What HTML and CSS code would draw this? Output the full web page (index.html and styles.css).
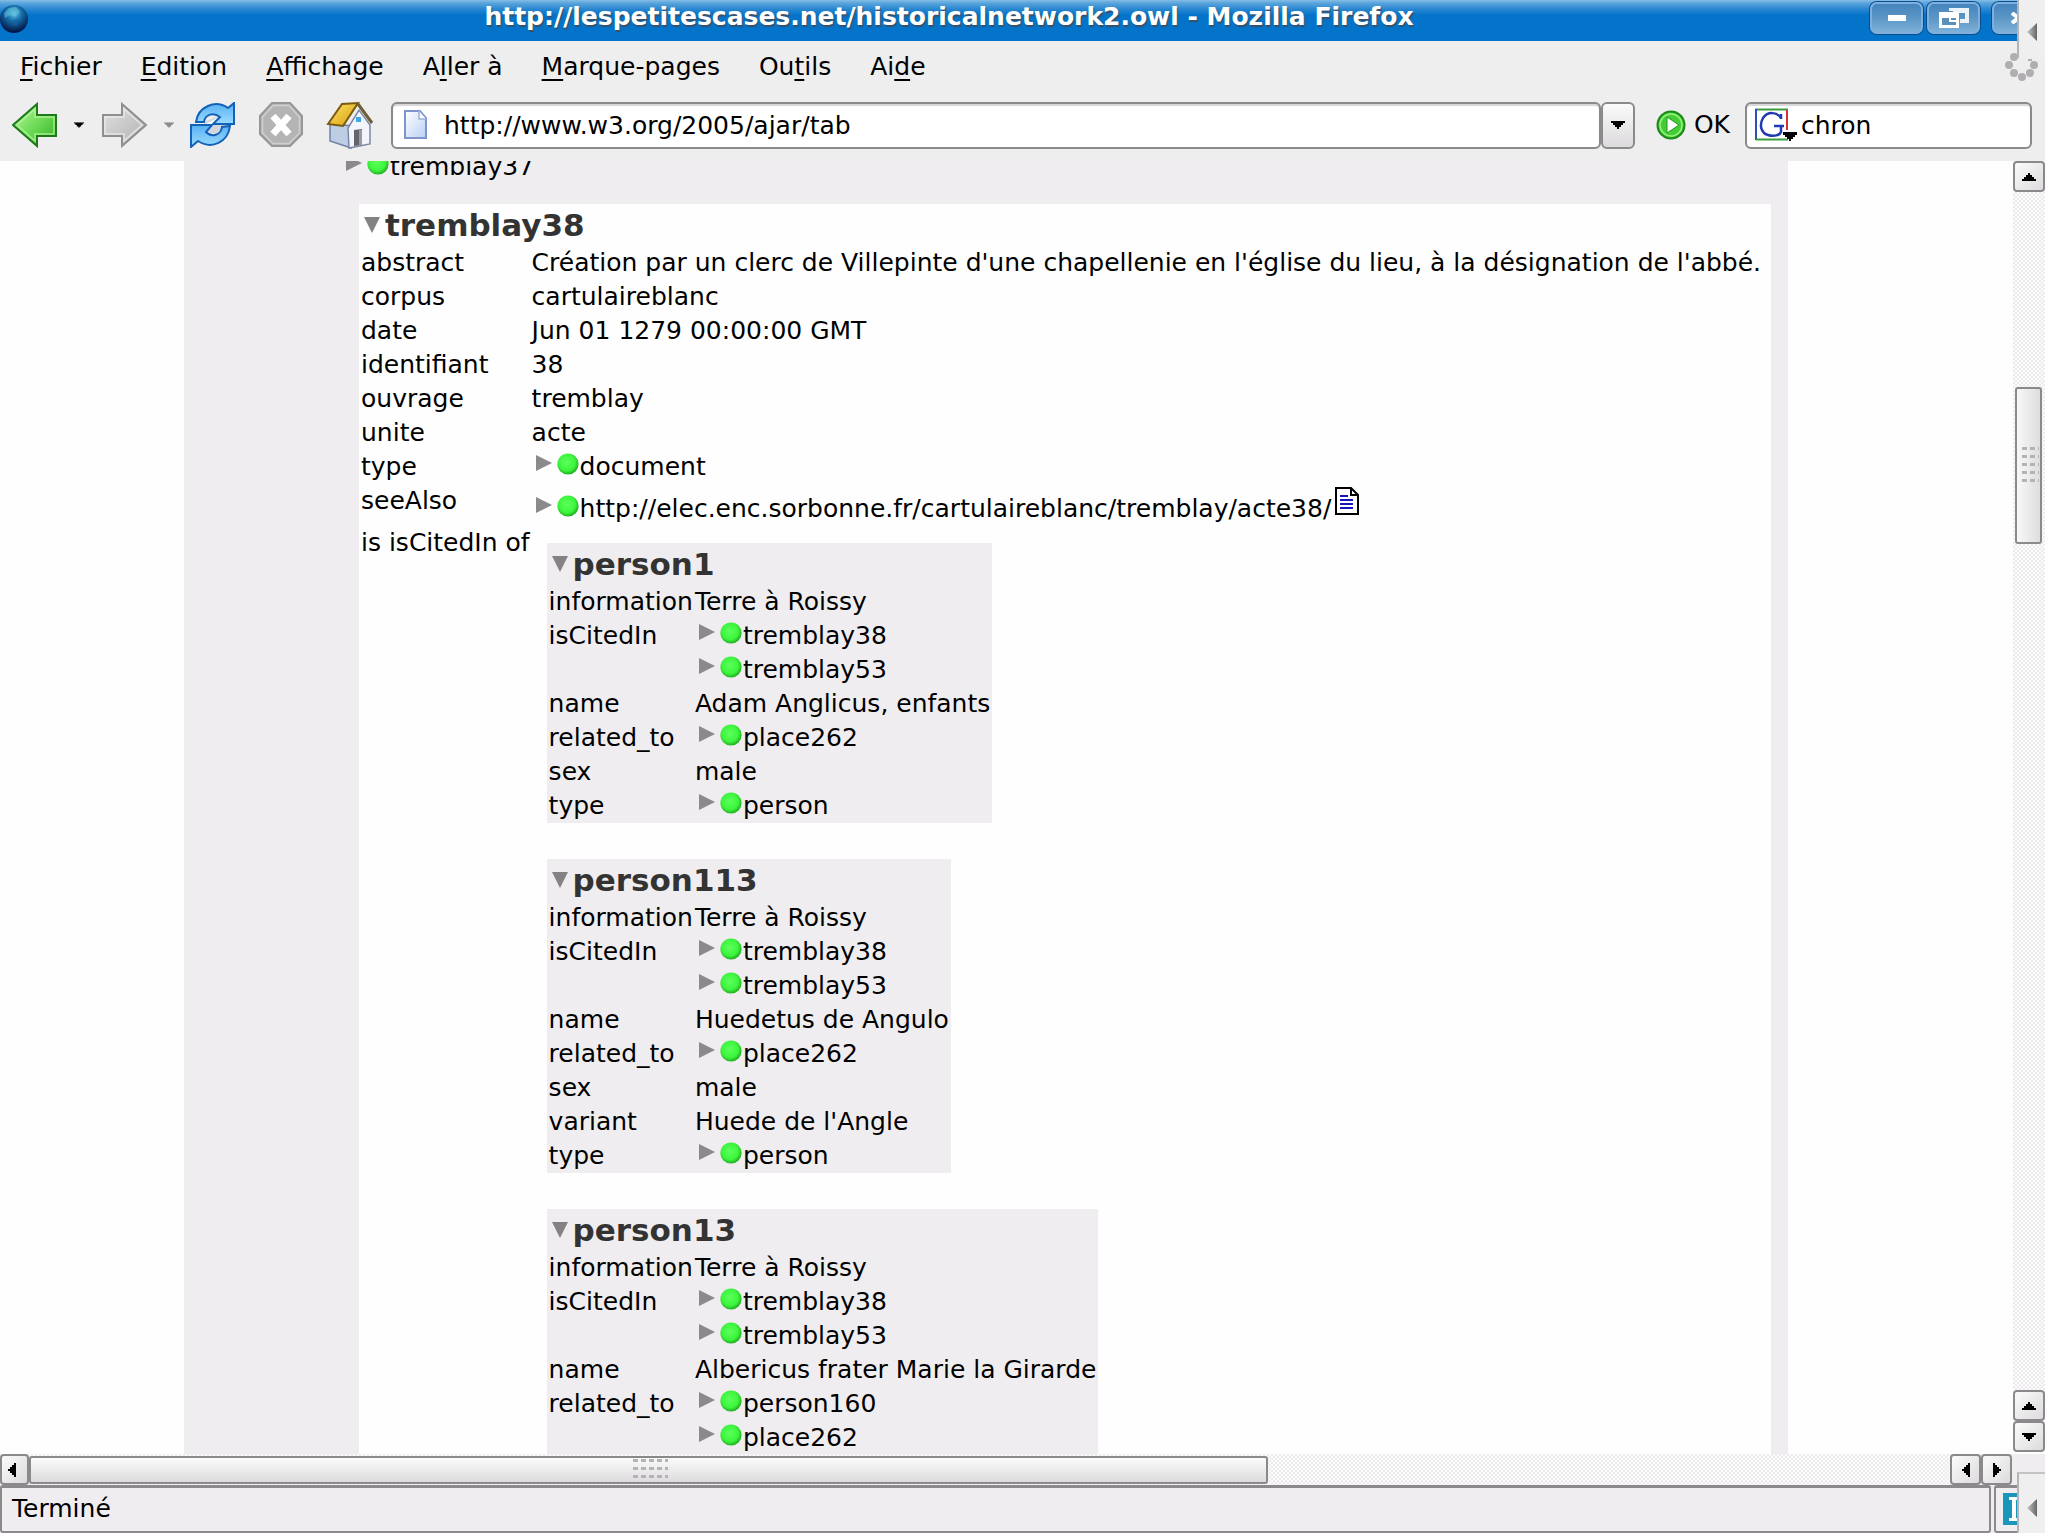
FILE: index.html
```html
<!DOCTYPE html>
<html lang="fr">
<head>
<meta charset="utf-8">
<title>http://lespetitescases.net/historicalnetwork2.owl - Mozilla Firefox</title>
<link rel="stylesheet" href="styles.css">
</head>
<body>
<svg class="defs" width="0" height="0" aria-hidden="true">
  <defs>
    <linearGradient id="g-green" x1="0" y1="0" x2="1" y2="1"><stop offset="0" stop-color="#c4f5a8"/><stop offset=".5" stop-color="#6fdc58"/><stop offset="1" stop-color="#2fae22"/></linearGradient>
    <linearGradient id="g-grey" x1="0" y1="0" x2="1" y2="1"><stop offset="0" stop-color="#e2e2e2"/><stop offset="1" stop-color="#b0b0b0"/></linearGradient>
    <linearGradient id="g-blue" x1="0" y1="0" x2="0" y2="1"><stop offset="0" stop-color="#58b0f4"/><stop offset="1" stop-color="#9bdcff"/></linearGradient>
    <linearGradient id="g-roof" x1="0" y1="0" x2="1" y2="1"><stop offset="0" stop-color="#ffe36a"/><stop offset="1" stop-color="#d79e08"/></linearGradient>
    <linearGradient id="g-page" x1="0" y1="0" x2="1" y2="1"><stop offset="0" stop-color="#ffffff"/><stop offset="1" stop-color="#b9d0f6"/></linearGradient>
    <linearGradient id="g-tri" x1="0" y1="0" x2="1" y2="0"><stop offset="0" stop-color="#c8c8c8"/><stop offset="1" stop-color="#666666"/></linearGradient>
    <radialGradient id="g-ball" cx=".45" cy=".42" r=".6"><stop offset="0" stop-color="#5cff5c"/><stop offset=".65" stop-color="#3df53d"/><stop offset="1" stop-color="#1da51d"/></radialGradient>
    <radialGradient id="g-globe" cx=".5" cy=".3" r=".65"><stop offset="0" stop-color="#5fc2e4"/><stop offset=".45" stop-color="#146aa6"/><stop offset="1" stop-color="#041848"/></radialGradient>
  </defs>
  <symbol id="closed" viewBox="0 0 16 16"><path d="M0 0L16 8L0 16Z" fill="#8b898b"/></symbol>
  <symbol id="open" viewBox="0 0 16 16"><path d="M0 0H16L8 16Z" fill="#848284"/></symbol>
  <symbol id="ball" viewBox="0 0 22 22"><circle cx="11" cy="11" r="10.6" fill="url(#g-ball)"/></symbol>
  <symbol id="up" viewBox="0 0 14 8"><path d="M6 0H8V2H10V4H12V6H14V8H0V6H2V4H4V2H6Z"/></symbol>
  <symbol id="down" viewBox="0 0 14 8"><path d="M0 0H14V2H12V4H10V6H8V8H6V6H4V4H2V2H0Z"/></symbol>
  <symbol id="left" viewBox="0 0 8 14"><path d="M8 0V14H6V12H4V10H2V8H0V6H2V4H4V2H6V0Z"/></symbol>
  <symbol id="right" viewBox="0 0 8 14"><path d="M0 0V14H2V12H4V10H6V8H8V6H6V4H4V2H2V0Z"/></symbol>
</svg>

<div class="window">
  <header class="titlebar">
    <svg class="globe" viewBox="0 0 28 28"><circle cx="14" cy="14" r="14" fill="url(#g-globe)"/><path d="M9 3L16 2L20 7L15 12L10 10L5 13L4 8Z" fill="#64c4dc" opacity=".55"/><path d="M14 15L19 14L17 21L12 20Z" fill="#1c5fa0" opacity=".6"/></svg>
    <h1 class="title">http://lespetitescases.net/historicalnetwork2.owl - Mozilla Firefox</h1>
    <div class="winbtns">
      <button class="winbtn" aria-label="Réduire"><svg width="18" height="6"><rect width="18" height="6" fill="#fff"/></svg></button>
      <button class="winbtn" aria-label="Restaurer"><svg width="30" height="20" viewBox="0 0 30 20"><path d="M10 0H30V15H21V11H26V5H14V3H10Z" fill="#eef3f8"/><path d="M0 4H20V20H0Z" fill="#fff"/><path d="M3 10H10V14H17V17H3Z" fill="#5c8fb8"/><path d="M12 10H17V12H12Z" fill="#5c8fb8"/></svg></button>
      <button class="winbtn close" aria-label="Fermer"><svg width="16" height="12" viewBox="0 0 16 12"><path d="M1 1L14 11M14 1L1 11" stroke="#fff" stroke-width="4"/></svg></button>
    </div>
  </header>

  <nav class="menubar">
    <button><u>F</u>ichier</button>
    <button><u>E</u>dition</button>
    <button><u>A</u>ffichage</button>
    <button>A<u>l</u>ler à</button>
    <button><u>M</u>arque-pages</button>
    <button>Ou<u>t</u>ils</button>
    <button>Ai<u>d</u>e</button>
    <svg class="throbber" viewBox="0 0 34 30" fill="#b0aeb0"><circle cx="9" cy="5" r="4"/><circle cx="4" cy="13" r="4"/><circle cx="9" cy="21" r="4"/><circle cx="17" cy="25" r="4"/><circle cx="25" cy="21" r="4"/><circle cx="29" cy="13" r="4"/><path d="M23 7H27V9H23Z"/></svg>
  </nav>

  <div class="toolbar">
    <button class="tool" aria-label="Précédent"><svg width="46" height="46" viewBox="0 0 46 46"><path d="M1 23L25 2V13H44V34H25V44Z" fill="url(#g-green)" stroke="#1c7a18" stroke-width="2"/><path d="M5 23L23 7V15H42V32H23V39Z" fill="none" stroke="#b6f59c" stroke-width="1.5" opacity=".8"/></svg></button>
    <button class="drop" aria-label="Historique précédent"><svg width="10" height="6" viewBox="0 0 14 8"><use href="#down"/></svg></button>
    <button class="tool" aria-label="Suivant"><svg width="46" height="46" viewBox="0 0 46 46"><path d="M44 23L20 2V13H1V34H20V44Z" fill="url(#g-grey)" stroke="#8f8f8f" stroke-width="2"/><path d="M40 23L22 7V15H3V32H22V39Z" fill="none" stroke="#ececec" stroke-width="1.5" opacity=".8"/></svg></button>
    <button class="drop off" aria-label="Historique suivant"><svg width="10" height="6" viewBox="0 0 14 8"><use href="#down"/></svg></button>
    <button class="tool reload" aria-label="Recharger"><svg width="46" height="46" viewBox="0 0 46 46"><path d="M14 20L29 14L40 24L28 32L17 30Z" fill="#d4d6de"/><path d="M16 22L27 16L30 18L20 26Z" fill="#fff"/><path d="M6 20C8 5 25 -3 38 6L44 1V22H23L30 15C24 10 15 12 14 20Z" fill="url(#g-blue)" stroke="#1263b8" stroke-width="2"/><path d="M40 24C38 40 22 48 8 39L1 45V23H22L16 30C22 36 31 33 32 25Z" fill="url(#g-blue)" stroke="#1263b8" stroke-width="2"/></svg></button>
    <button class="tool" aria-label="Arrêter"><svg width="46" height="46" viewBox="0 0 46 46"><path d="M14 1H32L44 14V32L32 44H14L2 32V14Z" fill="#b4b4b4" stroke="#979797" stroke-width="2"/><path d="M15 3.500H31L41.500 15V31L31 41.500H15L4.500 31V15Z" fill="none" stroke="#cfcfcf" stroke-width="1.500"/><path d="M15 14L31 32M31 14L15 32" stroke="#fff" stroke-width="7"/></svg></button>
    <button class="tool home" aria-label="Accueil"><svg width="48" height="48" viewBox="0 0 48 48"><path d="M4 22L25 25V47L4 40Z" fill="#bccde4" stroke="#6f83a8" stroke-width="1.500"/><path d="M22 27L33 9L44 24V43L23 47Z" fill="#f2f5fb" stroke="#7d88a6" stroke-width="1.500"/><path d="M28 29L36 28V44L28 45Z" fill="#64646c"/><path d="M33 29H36V44H33Z" fill="#9a9aa0"/><rect x="30" y="16" width="5" height="5" fill="#3ea8e4"/><path d="M2 23L16 3L32 2L17 25Z" fill="url(#g-roof)" stroke="#7a5a10" stroke-width="2"/><path d="M32 3L46 22" stroke="#6b6038" stroke-width="3"/></svg></button>
    <label class="field address">
      <svg width="24" height="30" viewBox="0 0 24 30"><path d="M1 1H16L22 8V28H1Z" fill="url(#g-page)" stroke="#7f94cc" stroke-width="2"/><path d="M15 1V9H22" fill="#fff" stroke="#9fb0d8" stroke-width="1.500"/></svg>
      <input type="text" aria-label="Adresse" value="http://www.w3.org/2005/ajar/tab">
    </label>
    <button class="urldrop" aria-label="Adresses visitées"><svg width="14" height="8"><use href="#down"/></svg></button>
    <button class="go"><svg width="30" height="30" viewBox="0 0 30 30"><circle cx="15" cy="15" r="13.500" fill="#43cc35" stroke="#1b8a16" stroke-width="2"/><circle cx="15" cy="15" r="11" fill="none" stroke="#98f080" stroke-width="1.500"/><path d="M11 7L23 15L11 23Z" fill="#fff" stroke="#1f9a1a"/></svg>OK</button>
    <label class="field search">
      <svg width="44" height="34" viewBox="0 0 44 34"><rect x="1" y="1" width="31" height="31" fill="#fff"/><path d="M0 1.500H33" stroke="#3a9c3a" stroke-width="2"/><path d="M1 1V32" stroke="#2a50c0" stroke-width="2"/><path d="M32 2V22" stroke="#d83030" stroke-width="2"/><path d="M1 31.500H33" stroke="#3a9c3a" stroke-width="2"/><path d="M26 11V6M26 10C22 4 13 3 8 10C4 17 6 25 13 27C19 29 25 27 26 24V18M19 18H29" fill="none" stroke="#2038b0" stroke-width="2.500"/><path d="M28 24H42V27H40V29H38V31H36V33H34V31H32V29H30V27H28Z"/></svg>
      <input type="text" aria-label="Recherche" value="chron">
    </label>
  </div>

  <div class="browser">
    <main class="view">
      <div class="sheet">
        <div class="node prev"><button class="tog" aria-label="Ouvrir"><svg><use href="#closed"/></svg></button><svg class="ball"><use href="#ball"/></svg><a href="#t37">tremblay37</a></div>
        <table class="card main">
          <tr><th colspan="2"><button class="tog" aria-label="Fermer"><svg><use href="#open"/></svg></button>tremblay38</th></tr>
          <tr><td class="key">abstract</td><td>Création par un clerc de Villepinte d'une chapellenie en l'église du lieu, à la désignation de l'abbé.</td></tr>
          <tr><td>corpus</td><td>cartulaireblanc</td></tr>
          <tr><td>date</td><td>Jun 01 1279 00:00:00 GMT</td></tr>
          <tr><td>identifiant</td><td>38</td></tr>
          <tr><td>ouvrage</td><td>tremblay</td></tr>
          <tr><td>unite</td><td>acte</td></tr>
          <tr><td>type</td><td><div class="node"><button class="tog" aria-label="Ouvrir"><svg><use href="#closed"/></svg></button><svg class="ball"><use href="#ball"/></svg><a href="#document">document</a></div></td></tr>
          <tr class="see"><td>seeAlso</td><td><div class="node"><button class="tog" aria-label="Ouvrir"><svg><use href="#closed"/></svg></button><svg class="ball"><use href="#ball"/></svg><a href="#acte38">http://elec.enc.sorbonne.fr/cartulaireblanc/tremblay/acte38/</a><svg class="doc" viewBox="0 0 26 28"><path d="M2 1H17L24 8V27H2Z" fill="#fff" stroke="#000" stroke-width="2"/><path d="M17 1V8H24" fill="none" stroke="#000" stroke-width="2"/><path d="M6 9H14M6 13H19M6 17H19M6 21H19" stroke="#1414c0" stroke-width="2"/></svg></div></td></tr>
          <tr><td>is isCitedIn of</td><td>
            <table class="card">
              <tr><th colspan="2"><button class="tog" aria-label="Fermer"><svg><use href="#open"/></svg></button>person1</th></tr>
              <tr><td class="key">information</td><td>Terre à Roissy</td></tr>
              <tr><td>isCitedIn</td><td><div class="node"><button class="tog" aria-label="Ouvrir"><svg><use href="#closed"/></svg></button><svg class="ball"><use href="#ball"/></svg><a href="#t38">tremblay38</a></div><div class="node"><button class="tog" aria-label="Ouvrir"><svg><use href="#closed"/></svg></button><svg class="ball"><use href="#ball"/></svg><a href="#t53">tremblay53</a></div></td></tr>
              <tr><td>name</td><td>Adam Anglicus, enfants</td></tr>
              <tr><td>related_to</td><td><div class="node"><button class="tog" aria-label="Ouvrir"><svg><use href="#closed"/></svg></button><svg class="ball"><use href="#ball"/></svg><a href="#p262">place262</a></div></td></tr>
              <tr><td>sex</td><td>male</td></tr>
              <tr><td>type</td><td><div class="node"><button class="tog" aria-label="Ouvrir"><svg><use href="#closed"/></svg></button><svg class="ball"><use href="#ball"/></svg><a href="#person">person</a></div></td></tr>
            </table>
            <table class="card">
              <tr><th colspan="2"><button class="tog" aria-label="Fermer"><svg><use href="#open"/></svg></button>person113</th></tr>
              <tr><td class="key">information</td><td>Terre à Roissy</td></tr>
              <tr><td>isCitedIn</td><td><div class="node"><button class="tog" aria-label="Ouvrir"><svg><use href="#closed"/></svg></button><svg class="ball"><use href="#ball"/></svg><a href="#t38">tremblay38</a></div><div class="node"><button class="tog" aria-label="Ouvrir"><svg><use href="#closed"/></svg></button><svg class="ball"><use href="#ball"/></svg><a href="#t53">tremblay53</a></div></td></tr>
              <tr><td>name</td><td>Huedetus de Angulo</td></tr>
              <tr><td>related_to</td><td><div class="node"><button class="tog" aria-label="Ouvrir"><svg><use href="#closed"/></svg></button><svg class="ball"><use href="#ball"/></svg><a href="#p262">place262</a></div></td></tr>
              <tr><td>sex</td><td>male</td></tr>
              <tr><td>variant</td><td>Huede de l'Angle</td></tr>
              <tr><td>type</td><td><div class="node"><button class="tog" aria-label="Ouvrir"><svg><use href="#closed"/></svg></button><svg class="ball"><use href="#ball"/></svg><a href="#person">person</a></div></td></tr>
            </table>
            <table class="card">
              <tr><th colspan="2"><button class="tog" aria-label="Fermer"><svg><use href="#open"/></svg></button>person13</th></tr>
              <tr><td class="key">information</td><td>Terre à Roissy</td></tr>
              <tr><td>isCitedIn</td><td><div class="node"><button class="tog" aria-label="Ouvrir"><svg><use href="#closed"/></svg></button><svg class="ball"><use href="#ball"/></svg><a href="#t38">tremblay38</a></div><div class="node"><button class="tog" aria-label="Ouvrir"><svg><use href="#closed"/></svg></button><svg class="ball"><use href="#ball"/></svg><a href="#t53">tremblay53</a></div></td></tr>
              <tr><td>name</td><td>Albericus frater Marie la Girarde</td></tr>
              <tr><td>related_to</td><td><div class="node"><button class="tog" aria-label="Ouvrir"><svg><use href="#closed"/></svg></button><svg class="ball"><use href="#ball"/></svg><a href="#p160">person160</a></div><div class="node"><button class="tog" aria-label="Ouvrir"><svg><use href="#closed"/></svg></button><svg class="ball"><use href="#ball"/></svg><a href="#p262">place262</a></div></td></tr>
            </table>
          </td></tr>
        </table>
      </div>
    </main>
    <div class="vbar">
      <button class="sb" aria-label="Haut"><svg width="14" height="8"><use href="#up"/></svg></button>
      <div class="vtrack"><div class="vthumb"><i class="grip"></i></div></div>
      <button class="sb" aria-label="Haut"><svg width="14" height="8"><use href="#up"/></svg></button>
      <button class="sb" aria-label="Bas"><svg width="14" height="8"><use href="#down"/></svg></button>
    </div>
  </div>
  <div class="hbar">
    <button class="sb" aria-label="Gauche"><svg width="8" height="14"><use href="#left"/></svg></button>
    <div class="htrack"><div class="hthumb"><i class="grip wide"></i></div></div>
    <button class="sb" aria-label="Gauche"><svg width="8" height="14"><use href="#left"/></svg></button>
    <button class="sb" aria-label="Droite"><svg width="8" height="14"><use href="#right"/></svg></button>
  </div>
  <footer class="status">
    <div class="msg">Terminé</div>
    <div class="ext"><svg width="16" height="32" viewBox="0 0 16 32"><rect width="16" height="32" fill="#1b96bb"/><path d="M6 4H16V7H13V25H16V28H6V25H9V7H6Z" fill="#fff"/></svg></div>
  </footer>
  <div class="edge top"><svg width="10" height="18" viewBox="0 0 10 18"><path d="M10 0V18L0 9Z" fill="url(#g-tri)"/></svg></div>
  <div class="edge bottom"><svg width="10" height="18" viewBox="0 0 10 18"><path d="M10 0V18L0 9Z" fill="url(#g-tri)"/></svg></div>
</div>
</body>
</html>
```
FILE: styles.css
```css
* { box-sizing: border-box; }
body {
  margin: 0;
  background: #fefefe;
  color: #000;
  font: 25px/34px "DejaVu Sans", sans-serif;
}
button, input { font: inherit; color: inherit; border: 0; padding: 0; background: none; }
a { color: inherit; text-decoration: none; }
svg { display: block; flex: none; }
.defs { position: absolute; }

.window {
  position: relative;
  display: flex;
  flex-direction: column;
  height: 100vh;
  margin-right: 3px;
  padding-bottom: 3px;
  overflow: hidden;
}

/* Title bar */
.titlebar {
  display: flex;
  align-items: center;
  height: 41px;
  flex: none;
  background: linear-gradient(#86bde6 0, #5ba5dc 3px, #2a87d0 9px, #0474ca 15px, #0474ca);
}
.globe { width: 28px; height: 28px; margin-bottom: 4px; }
.title {
  flex: 1;
  margin: 0;
  padding-bottom: 8px;
  text-align: center;
  color: #fff;
  font-size: 25px;
  line-height: 32px;
  text-shadow: 1px 2px 1px #3a5068;
  white-space: nowrap;
}
.winbtns { display: flex; gap: 4px; padding-bottom: 6px; }
.winbtn {
  display: grid;
  place-items: center;
  width: 53px;
  height: 32px;
  border: 2px solid #7fb0dc;
  border-radius: 7px;
  background: linear-gradient(#4484bd, #5c96c6 50%, #7db0d8);
  box-shadow: 0 0 0 1px #0a4c8c;
}
.winbtn.close { margin-left: 8px; }

/* Menus */
.menubar {
  display: flex;
  align-items: center;
  gap: 39px;
  height: 50px;
  flex: none;
  padding: 2px 6px 0 20px;
  background: #eeeeee;
}
.menubar u { text-underline-offset: 4px; text-decoration-thickness: 2px; }
.throbber { width: 34px; height: 30px; margin-left: auto; }

/* Toolbar */
.toolbar {
  display: flex;
  align-items: center;
  height: 70px;
  flex: none;
  padding: 0 13px 2px 12px;
  background: #efeeef;
}
.drop { width: 10px; margin: 0 18px 0 16px; }
.drop.off { fill: #8c8c8c; margin-right: 16px; }
.tool.reload { margin-right: 22px; }
.tool.home { margin: 0 17px 0 22px; }
.field {
  display: flex;
  align-items: center;
  height: 47px;
  border: 2px solid #8b898b;
  border-radius: 6px;
  background: #fff;
  box-shadow: inset 0 2px 1px #d8d6d8;
}
.field input { flex: 1; min-width: 0; padding-top: 2px; outline: 0; }
.address { flex: 1; gap: 16px; padding-left: 11px; }
.urldrop {
  display: grid;
  place-items: center;
  width: 34px;
  height: 47px;
  border: 2px solid #8b898b;
  border-radius: 6px;
  background: linear-gradient(#fafafa, #dcdadc);
}
.go { display: flex; align-items: center; gap: 8px; margin: 0 15px 0 21px; }
.search { width: 287px; gap: 2px; padding-left: 8px; }

/* Page */
.browser { display: flex; flex: 1; min-height: 0; }
.view { flex: 1; min-width: 0; overflow: hidden; background: #fefefe; }
.sheet {
  width: fit-content;
  margin: -11px 0 0 184px;
  padding: 0 17px 0 175px;
  background: #efedef;
}
.prev { margin: 0 0 20px -17px; }
.node { display: flex; align-items: center; height: 34px; padding-left: 4px; }
.tog { flex: none; }
.tog svg { width: 16px; height: 16px; }
.node .tog { padding-bottom: 8px; }
.ball { width: 22px; height: 22px; margin: 0 1px 6px 5px; }
.doc { width: 26px; height: 28px; margin: 0 0 16px 3px; }
.card {
  border-spacing: 0;
  white-space: nowrap;
  background: #efedef;
}
.card td { padding: 0 2px; vertical-align: top; }
.card td:first-child { padding-right: 0; }
.card th {
  height: 42px;
  padding: 0 5px;
  text-align: left;
  color: #333;
  font-size: 31px;
}
.card th .tog { display: inline-block; margin-right: 5px; vertical-align: 3px; }
.card.main { min-width: 1412px; background: #fefefe; }
.main .key { width: 170px; }
.card .card { margin: 17px 18px 36px 15px; }
.card .card + .card { margin-top: 0; }
.card .card .key { width: 146px; }
.see .node { height: 42px; padding-top: 8px; }

/* Scroll bars */
.sb {
  display: grid;
  place-items: center;
  width: 31px;
  height: 31px;
  flex: none;
  border: 2px solid #8b898b;
  border-radius: 4px;
  background: linear-gradient(135deg, #fbfbfb, #dddbdd);
}
.vbar {
  display: flex;
  flex-direction: column;
  width: 32px;
  padding-bottom: 2px;
}
.vbar .sb { width: 32px; }
.vtrack, .htrack {
  flex: 1;
  background: conic-gradient(#edebed 25%, #fbfbfb 0 50%, #edebed 0 75%, #fbfbfb 0) 0 0 / 4px 4px;
}
.vtrack { padding: 195px 3px 0 2px; }
.vthumb {
  display: grid;
  place-items: center;
  height: 157px;
  border: 2px solid #8b898b;
  border-radius: 3px;
  background: linear-gradient(90deg, #f8f8f8, #dfdddf);
}
.grip {
  width: 20px;
  height: 38px;
  background: conic-gradient(from 90deg at 3px 3px, transparent 75%, #b5b3b5 0) 0 0 / 8px 8px;
}
.grip.wide { width: 38px; height: 22px; }
.hbar { display: flex; height: 31px; flex: none; padding-right: 33px; background: #efedef; }
.hbar .sb:first-child { width: 29px; padding-right: 6px; }
.htrack { padding-top: 2px; }
.hthumb {
  display: grid;
  place-items: center;
  width: 64.5%;
  height: 28px;
  border: 2px solid #8b898b;
  border-radius: 3px;
  background: linear-gradient(#fbfbfb, #dddbdd);
}

/* Status bar */
.status { display: flex; height: 48px; flex: none; gap: 3px; background: #efedef; }
.status > div {
  border: solid #8b898b;
  border-width: 3px 2px 2px;
  border-radius: 3px;
}
.msg { flex: 1; padding: 4px 10px; }
.ext { width: 51px; padding: 5px 7px; }

/* Panel edge showing over the window's right side */
.edge {
  position: absolute;
  right: 0;
  display: grid;
  place-items: center;
  width: 28px;
  border-left: 2px solid #b5b3b5;
  background: #efefef;
}
.edge.top { top: 0; height: 58px; padding-top: 6px; }
.edge.bottom { bottom: 3px; height: 61px; padding-top: 8px; border-top: 2px solid #c5c3c5; }
```
